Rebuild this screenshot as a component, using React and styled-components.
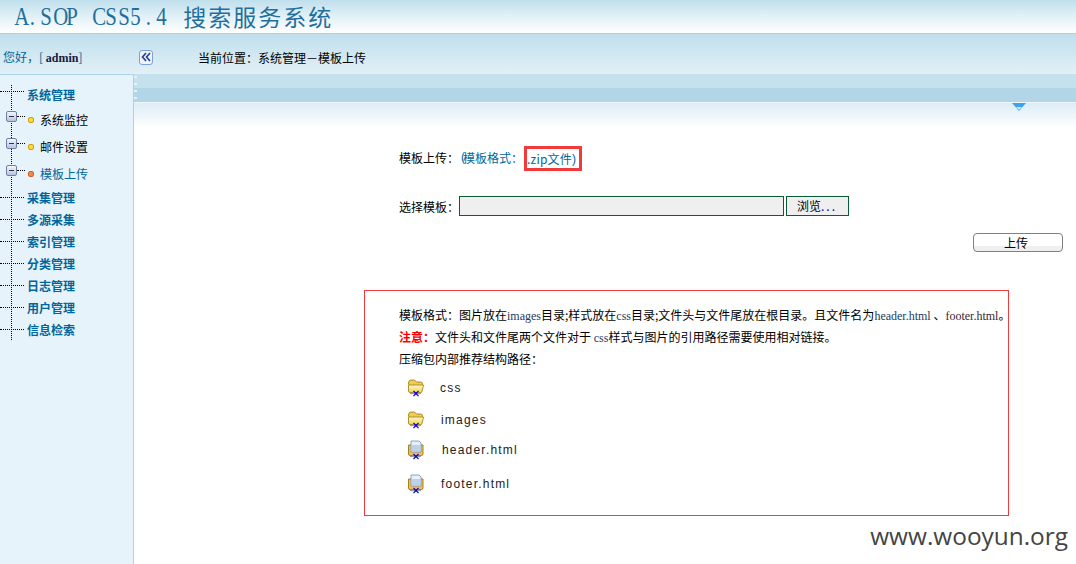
import React from 'react'
import styled, { createGlobalStyle } from 'styled-components'

const CJK = `"Noto Sans CJK SC", "Liberation Sans", sans-serif`

const Global = createGlobalStyle`
  html, body { margin: 0; padding: 0; background: #fff; }
  body { font-family: ${CJK}; font-size: 12px; color: #000; }
`

const Page = styled.div`
  position: relative;
  width: 1076px;
  height: 564px;
  overflow: hidden;
  display: flex;
  flex-direction: column;
`

const Header = styled.header`
  height: 34px;
  flex: none;
  padding-left: 13px;
  box-sizing: border-box;
  display: flex;
  align-items: center;
  border-bottom: 1px solid #a9d3e6;
  background: linear-gradient(#bfdfec 0%, #dfeff6 45%, #ffffff 100%);
  color: #1f6f9e;
  white-space: pre;
`

// the title's latin part is monospaced in the shot, so each letter gets its own cell
const TitleLatin = styled.span`
  display: flex;
  font-family: "Liberation Serif", serif;
  font-size: 26px;
  line-height: 33px;
`

const TitleCell = styled.span`
  display: inline-block;
  width: 12.95px;
  text-align: center;
  transform: scaleX(.8);
`

const TitleCjk = styled.span`
  margin-left: 15px;
  font-family: "Noto Sans CJK SC", serif;
  font-size: 23px;
  line-height: 33px;
  letter-spacing: 2px;
`

const CrumbBar = styled.div`
  height: 40px;
  flex: none;
  box-sizing: border-box;
  padding-top: 6px;
  display: flex;
  align-items: center;
  background: linear-gradient(#c0dfec 0%, #e2f0f7 100%);
  font-size: 12px;
`

const Greeting = styled.div`
  width: 139px;
  flex: none;
  padding-left: 3px;
  box-sizing: border-box;
  color: #00669b;
  b { color: #1a1a40; font-family: "Liberation Serif", serif; }
`

const Collapse = styled.span`
  width: 14px;
  height: 15px;
  flex: none;
  box-sizing: border-box;
  margin-right: 45px;
  display: flex;
  align-items: center;
  justify-content: center;
  border: 1px solid #7f9fd8;
  border-radius: 3px;
  background: #eef3fc;
`

const Body = styled.div`
  flex: 1;
  display: flex;
  min-height: 0;
`

const Side = styled.nav`
  width: 134px;
  flex: none;
  box-sizing: border-box;
  border-right: 1px solid #a9d3e6;
  border-top: 1px solid #a9d3e6;
  background: #e7f3fa;
  padding-top: 8px;
`

const Tree = styled.ul`
  position: relative;
  list-style: none;
  margin: 0;
  padding: 0;
  &::before {
    content: "";
    position: absolute;
    left: 11px;
    top: 2px;
    bottom: 0;
    border-left: 1px dotted #000;
  }
`

const Item = styled.li`
  height: 22px;
  display: flex;
  align-items: center;
  padding-left: 27px;
  position: relative;
  font-size: 12px;
  font-weight: 700;
  color: #00669b;
  white-space: nowrap;
  &::before {
    content: "";
    position: absolute;
    left: 0;
    width: 24px;
    top: ${p => (p.$first ? '8px' : '50%')};
    border-top: 1px dotted #000;
  }
`

const Sub = styled.li`
  height: 27px;
  box-sizing: border-box;
  padding: 2px 0 0 28px;
  display: flex;
  align-items: center;
  position: relative;
  font-size: 12px;
  color: ${p => (p.$active ? '#00669b' : '#000')};
  white-space: nowrap;
  &::before {
    content: "";
    position: absolute;
    left: 17px;
    width: 8px;
    top: 11px;
    border-top: 1px dotted #000;
  }
`

const Toggle = styled.span`
  position: absolute;
  left: 6px;
  top: 6px;
  width: 11px;
  height: 11px;
  box-sizing: border-box;
  border: 1px solid #6d7fa6;
  border-radius: 2px;
  background: linear-gradient(#f4f6fb, #b7c3de);
  display: flex;
  align-items: center;
  justify-content: center;
  &::after {
    content: "";
    width: 5px;
    height: 1px;
    background: #333;
  }
`

const Dot = styled.span`
  width: 6px;
  height: 6px;
  flex: none;
  box-sizing: border-box;
  margin-right: 6px;
  border-radius: 2px;
  border: 1px solid ${p => (p.$active ? '#c8662a' : '#c9a010')};
  background: ${p => (p.$active ? '#f08a4a' : '#ffd83a')};
`

const Main = styled.main`
  flex: 1;
  min-width: 0;
  display: flex;
  flex-direction: column;
`

const Strip = styled.div`
  height: 29px;
  flex: none;
  box-sizing: border-box;
  border-bottom: 1px solid #f0f8fc;
  background: linear-gradient(#c5e1ed 0 14px, #b2d6e8 14px 100%);
  position: relative;
  &::before {
    content: "";
    position: absolute;
    left: 0;
    top: 2px;
    bottom: 0;
    width: 3px;
    background: repeating-linear-gradient(#e6f3f8 0 2px, transparent 2px 7px);
  }
`

const Fade = styled.div`
  height: 25px;
  flex: none;
  position: relative;
  background: linear-gradient(#dcedf6, #ffffff);
`

const Arrow = styled.svg`
  position: absolute;
  left: 878px;
  top: 0;
`

const Content = styled.div`
  flex: 1;
  position: relative;
  padding: 0 0 0 265px;
`

const FormatLine = styled.div`
  display: flex;
  align-items: center;
  height: 20px;
  margin-top: 19px;
`

const Blue = styled.span`
  color: #00669b;
`

const Paren = styled.span`
  font-family: "Liberation Sans", sans-serif;
  color: #00669b;
`

const OpenParen = styled(Paren)`
  margin: 0 -2px 0 2px;
`

const Zip = styled.span`
  display: inline-flex;
  align-items: center;
  box-sizing: border-box;
  width: 58px;
  height: 25px;
  margin: 3px 0 0 1px;
  padding-left: 0;
  border: 3px solid #f23a3a;
  color: #00669b;
  letter-spacing: .2px;
  white-space: nowrap;
`

const FileRow = styled.div`
  display: flex;
  align-items: center;
  height: 22px;
  margin-top: 28px;
`

const FileBox = styled.div`
  width: 325px;
  height: 20px;
  box-sizing: border-box;
  border: 1px solid #0b5c36;
  background: #efefef;
`

const Browse = styled.button`
  width: 63px;
  height: 20px;
  box-sizing: border-box;
  margin-left: 2px;
  padding: 0 0 3px 10px;
  text-align: left;
  border: 1px solid #0b5c36;
  background: #efefef;
  font-family: ${CJK};
  font-size: 12px;
  color: #000;
  span { color: #0000c0; letter-spacing: 2px; }
`

const UploadRow = styled.div`
  display: flex;
  justify-content: flex-end;
  padding-right: 13px;
  margin-top: 16px;
`

const Upload = styled.button`
  width: 90px;
  height: 19px;
  box-sizing: border-box;
  padding: 0 4px 0 0;
  border: 1px solid #808080;
  border-radius: 4px;
  background: linear-gradient(#fff 0 70%, #efefef 70% 100%);
  font-family: ${CJK};
  font-size: 12px;
  line-height: 16px;
  color: #000;
`

const Notice = styled.section`
  width: 645px;
  height: 226px;
  box-sizing: border-box;
  margin: 38px 0 0 -35px;
  padding: 13px 0 0 34px;
  border: 1px solid #f23a3a;
`

const NoteLine = styled.div`
  height: 22px;
  line-height: 22px;
  white-space: nowrap;
  b { color: #f00; }
`

const Latin = styled.span`
  font-family: "Liberation Serif", serif;
  color: ${p => p.$c || '#223a5e'};
`

const PathRow = styled.div`
  display: flex;
  align-items: center;
  height: ${p => p.$h}px;
  padding-left: 8px;
`

const PathName = styled.span`
  margin-left: ${p => p.$gap}px;
  font-family: "Liberation Sans", sans-serif;
  font-size: 12px;
  letter-spacing: 1.2px;
  color: #222;
`

const Mark = styled.div`
  position: absolute;
  right: 8px;
  bottom: 14px;
  font-family: "Open Sans", sans-serif;
  font-size: 24.4px;
  line-height: 28px;
  color: #444;
`

const Badge = () => (
  <path d="M6.5 14l5 5M11.5 14l-5 5" stroke="#0000d8" strokeWidth="1.1" fill="none" />
)

const FolderIcon = () => (
  <svg width="18" height="20" viewBox="0 1 18 20">
    <defs>
      <linearGradient id="folderFill" x1="0" y1="0" x2="0" y2="1">
        <stop offset="0" stopColor="#fffbc8" />
        <stop offset="1" stopColor="#f5cf55" />
      </linearGradient>
    </defs>
    <path d="M1.5 7q0-4 2-4h4l2 2h4q2 0 2 2v2H3z" fill="#efcb58" stroke="#b08a24" />
    <path d="M1.5 8h15l-1.5 6.5q-.2 1-1.2 1H3q-1.5 0-1.5-1.5z" fill="url(#folderFill)" stroke="#b8902a" />
    <path d="M3 16.5h11" stroke="#9a9a9a" strokeWidth="1.2" />
    <Badge />
  </svg>
)

const PageIcon = () => (
  <svg width="18" height="20" viewBox="0 0 18 20">
    <path d="M1.5 5h14.5v9q0 1.5-1.5 1.5H3q-1.5 0-1.5-1.5z" fill="#f0bd62" stroke="#a9801e" />
    <path d="M4 1h8l2 2v9H4z" fill="#e6f1fb" stroke="#6d8fb8" strokeWidth=".8" />
    <path d="M5 6h8M5 8h8M5 10h8" stroke="#8fb4da" />
    <path d="M3 16.5h11" stroke="#9a9a9a" strokeWidth="1.2" />
    <Badge />
  </svg>
)

const ChevronLeft = () => (
  <svg width="10" height="10" viewBox="0 0 10 10" fill="none" stroke="#1f3f9a" strokeWidth="1.6">
    <path d="M5 1L1.5 5 5 9M9 1L5.5 5 9 9" />
  </svg>
)

const groups = ['采集管理', '多源采集', '索引管理', '分类管理', '日志管理', '用户管理', '信息检索']

const subs = [
  { label: '系统监控' },
  { label: '邮件设置' },
  { label: '模板上传', active: true },
]

const files = [
  { name: 'css', Icon: FolderIcon, gap: 15, h: 36 },
  { name: 'images', Icon: FolderIcon, gap: 16, h: 28 },
  { name: 'header.html', Icon: PageIcon, gap: 17, h: 32 },
  { name: 'footer.html', Icon: PageIcon, gap: 16, h: 36 },
]

export default function App() {
  return (
    <Page>
      <Global />
      <Header>
        <TitleLatin>
          {[...'A.SOP CSS5.4'].map((c, i) => <TitleCell key={i}>{c}</TitleCell>)}
        </TitleLatin>
        <TitleCjk>搜索服务系统</TitleCjk>
      </Header>
      <CrumbBar>
        <Greeting>您好，[ <b>admin</b>]</Greeting>
        <Collapse><ChevronLeft /></Collapse>
        <span>当前位置：系统管理－模板上传</span>
      </CrumbBar>
      <Body>
        <Side>
          <Tree>
            <Item $first>系统管理</Item>
            {subs.map(s => (
              <Sub key={s.label} $active={s.active}>
                <Toggle />
                <Dot $active={s.active} />
                {s.label}
              </Sub>
            ))}
            {groups.map(g => <Item key={g}>{g}</Item>)}
          </Tree>
        </Side>
        <Main>
          <Strip />
          <Fade>
            <Arrow width="14" height="8" viewBox="0 0 14 8">
              <path d="M0 0h14L7 8z" fill="#3aa4e8" />
              <path d="M4 4h6L7 7z" fill="#bfe6fb" />
            </Arrow>
          </Fade>
          <Content>
            <FormatLine>
              模板上传：<OpenParen>(</OpenParen><Blue>模板格式：</Blue>
              <Zip>.zip文件<Paren>)</Paren></Zip>
            </FormatLine>
            <FileRow>
              选择模板：
              <FileBox />
              <Browse>浏览<span>...</span></Browse>
            </FileRow>
            <UploadRow>
              <Upload>上传</Upload>
            </UploadRow>
            <Notice>
              <NoteLine>
                模板格式：图片放在<Latin>images</Latin>目录;样式放在<Latin>css</Latin>目录;文件头与文件尾放在根目录。且文件名为<Latin>header.html</Latin> 、<Latin $c="#3a1f2f">footer.html</Latin>。
              </NoteLine>
              <NoteLine>
                <b>注意：</b>文件头和文件尾两个文件对于 <Latin>css</Latin>样式与图片的引用路径需要使用相对链接。
              </NoteLine>
              <NoteLine>压缩包内部推荐结构路径：</NoteLine>
              {files.map(({ name, Icon, gap, h }) => (
                <PathRow key={name} $h={h}>
                  <Icon />
                  <PathName $gap={gap}>{name}</PathName>
                </PathRow>
              ))}
            </Notice>
          </Content>
        </Main>
      </Body>
      <Mark>www.wooyun.org</Mark>
    </Page>
  )
}
